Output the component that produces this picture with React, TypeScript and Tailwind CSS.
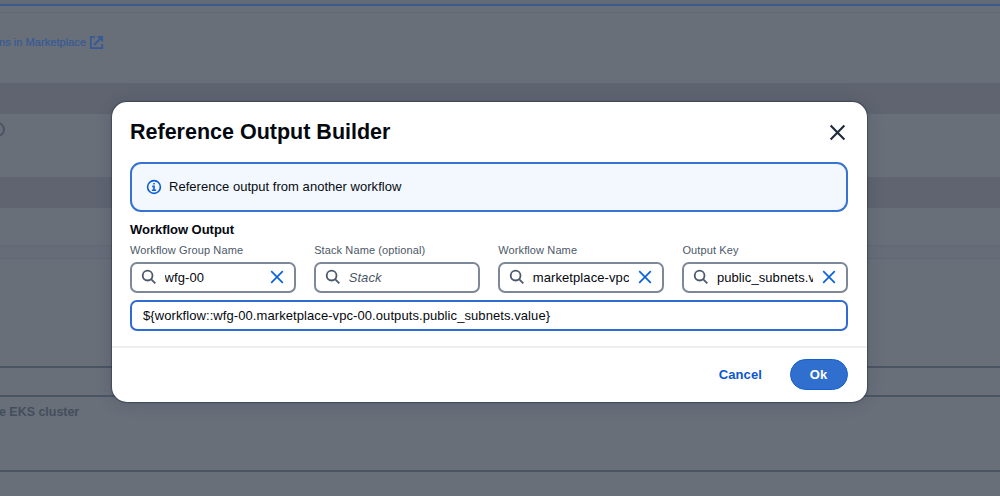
import type { ReactNode } from "react";

function SearchIcon() {
  return (
    <svg className="size-[16px] shrink-0" viewBox="0 0 16 16" fill="none" stroke="#4b5869" strokeWidth="1.8">
      <circle cx="6.6" cy="6.6" r="4.9" />
      <path d="M10.1 10.1 14.3 14.3" />
    </svg>
  );
}

function Cross({ className, width }: { className: string; width: number }) {
  return (
    <svg className={className} viewBox="0 0 16 16" fill="none" stroke="currentColor" strokeWidth={width}>
      <path d="M2.2 2.2 13.8 13.8M13.8 2.2 2.2 13.8" />
    </svg>
  );
}

function InfoIcon() {
  return (
    <svg className="size-[16px] shrink-0" viewBox="0 0 16 16" fill="none" stroke="#0b5cd5" strokeWidth="1.6">
      <circle cx="8" cy="8" r="6.4" />
      <path d="M8 3.9V5.6M6.2 7.4H8V11M5.9 11.2H10.1" />
    </svg>
  );
}

function Field({ label, value, placeholder }: { label: string; value?: string; placeholder?: string }) {
  return (
    <div className="min-w-0">
      <div className="h-[18px] whitespace-nowrap text-[11px] leading-[18px] tracking-[0.11px] text-[#4c5867]">{label}</div>
      <div className="mt-[3px] flex h-[31px] items-center rounded-[7px] border-2 border-[#7d8898] bg-white pl-[9px]">
        <SearchIcon />
        <div className="ml-[7.5px] w-[96.5px] overflow-hidden whitespace-nowrap pt-px text-[13px] leading-[18px] tracking-[0.09px] text-[#05080f] [font-kerning:none]">
          {value ?? <span className="italic text-[#4c5867]">{placeholder}</span>}
        </div>
        {value && <Cross className="ml-[7.5px] size-[16px] shrink-0 text-[#0b62dc]" width={1.7} />}
      </div>
    </div>
  );
}

function Strip({ children, className }: { children?: ReactNode; className: string }) {
  return <div className={`shrink-0 ${className}`}>{children}</div>;
}

function Backdrop() {
  return (
    <div className="flex h-full flex-col bg-[#686f79]">
      <Strip className="h-[4px] bg-[#626a75]" />
      <Strip className="h-[2px] bg-[#3a5a8c]" />
      <Strip className="h-[77px] pt-[6px]">
        <div className="h-px bg-[#626873]" />
        <div className="mt-[21px] flex h-[16px] items-center text-[#365a97]">
          <span className="ml-[-1px] whitespace-nowrap text-[11px] leading-[16px] tracking-[0.05px] [-webkit-text-stroke:0.2px_#365a97]">ns in Marketplace</span>
          <svg className="ml-[2.5px] size-[15px]" viewBox="0 0 15 15" fill="none" stroke="currentColor" strokeWidth="1.8">
            <path d="M6 1.8H1.8V13.2H13.2V9M8.4 1.8H13.2V6.6M13 2 5 10" />
          </svg>
        </div>
      </Strip>
      <Strip className="h-[31px] bg-[#5f6470]" />
      <Strip className="h-[63px] pt-[8px]">
        <div className="ml-[-10px] size-[15px] rounded-full border-2 border-[#4b5463]" />
      </Strip>
      <Strip className="h-[31px] bg-[#5f6470]" />
      <Strip className="h-[37px]" />
      <Strip className="h-[2px] bg-[#636a75]" />
      <Strip className="h-[11px] bg-[#666d78]" />
      <Strip className="h-px bg-[#606772]" />
      <Strip className="h-[107px]" />
      <Strip className="h-[2px] bg-[#4b5463]" />
      <Strip className="h-[27px]" />
      <Strip className="h-[2px] bg-[#4b5463]" />
      <Strip className="h-[73px] pt-[6px]">
        <div className="ml-[-1px] text-[12.5px] font-bold leading-[18px] tracking-[-0.03px] text-[#434e5d]">e EKS cluster</div>
      </Strip>
      <Strip className="h-[2px] bg-[#4b5463]" />
    </div>
  );
}

function Dialog() {
  return (
    <div className="flex h-[299.5px] w-[755px] flex-col rounded-[15px] bg-white px-[18.5px] shadow-[0_0_1px_1px_rgba(35,47,62,0.5),0_1px_16px_rgba(35,47,72,0.22)]">
      <div className="flex h-[60px] items-center justify-between">
        <h1 className="mt-[-1px] text-[21.5px] font-bold leading-[26px] text-[#04080f]">Reference Output Builder</h1>
        <Cross className="mr-[1.5px] size-[19px] text-[#1d2b3d]" width={1.8} />
      </div>
      <div className="flex h-[49.5px] shrink-0 items-center gap-[7px] rounded-[11px] border-2 border-[#3673d3] bg-[#f2f8fd] pl-[14px] text-[13px] tracking-[0.03px] text-[#070b12]">
        <InfoIcon />
        <span>Reference output from another workflow</span>
      </div>
      <h2 className="mt-[8.5px] h-[19px] text-[13px] font-bold leading-[19px] tracking-[-0.03px] text-[#04080f]">Workflow Output</h2>
      <div className="mt-[1.5px] grid grid-cols-4 gap-[18.5px]">
        <Field label="Workflow Group Name" value="wfg-00" />
        <Field label="Stack Name (optional)" placeholder="Stack" />
        <Field label="Workflow Name" value="marketplace-vpc-00" />
        <Field label="Output Key" value="public_subnets.value" />
      </div>
      <div className="mt-[7.5px] flex h-[31px] shrink-0 items-center rounded-[7px] border-2 border-[#2f6ad5] pl-[11px] pt-px text-[13px] tracking-[0.08px] text-[#05080f] [font-kerning:none]">
        {"${workflow::wfg-00.marketplace-vpc-00.outputs.public_subnets.value}"}
      </div>
      <div className="mx-[-18.5px] mt-[15px] flex flex-1 items-center justify-end border-t-2 border-[#eeeff0] pr-[19px] text-[13px] font-bold">
        <button className="tracking-[0.1px] text-[#0b55cf]">Cancel</button>
        <button className="ml-[27.5px] h-[31px] w-[58px] rounded-full border border-[#1560cf] bg-[#316fce] text-white">Ok</button>
      </div>
    </div>
  );
}

export default function App() {
  return (
    <div className="relative h-[496px] w-[1000px] overflow-hidden font-['Liberation_Sans',Arial,sans-serif]">
      <Backdrop />
      <div className="absolute inset-0 pl-[111.5px] pt-[102px]">
        <Dialog />
      </div>
    </div>
  );
}
